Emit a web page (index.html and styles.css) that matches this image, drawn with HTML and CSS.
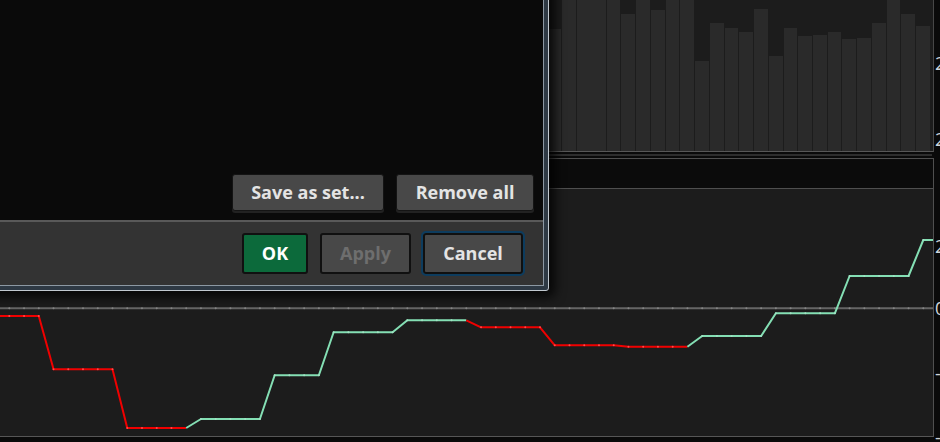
FILE: index.html
```html
<!DOCTYPE html>
<html>
<head>
<meta charset="utf-8">
<title>Chart settings</title>
<link rel="stylesheet" href="styles.css">
</head>
<body>
<div class="app">
  <div class="charts">
    <div class="bars-panel">
      <svg class="bars" width="933" height="151" viewBox="0 0 933 151">
        <g fill="#2a2a2a">
          <rect x="548" y="29" width="13" height="122"/>
          <rect x="562" y="0" width="14" height="151"/>
          <rect x="577" y="0" width="29" height="151"/>
          <rect x="607" y="0" width="13" height="151"/>
          <rect x="621" y="14" width="14" height="137"/>
          <rect x="636" y="0" width="14" height="151"/>
          <rect x="651" y="10" width="14" height="141"/>
          <rect x="666" y="0" width="13" height="151"/>
          <rect x="680" y="0" width="14" height="151"/>
          <rect x="695" y="61" width="14" height="90"/>
          <rect x="710" y="23" width="14" height="128"/>
          <rect x="725" y="28" width="13" height="123"/>
          <rect x="739" y="32" width="14" height="119"/>
          <rect x="754" y="9" width="14" height="142"/>
          <rect x="769" y="56" width="14" height="95"/>
          <rect x="784" y="28" width="13" height="123"/>
          <rect x="798" y="36" width="14" height="115"/>
          <rect x="813" y="35" width="14" height="116"/>
          <rect x="828" y="32" width="13" height="119"/>
          <rect x="842" y="39" width="14" height="112"/>
          <rect x="857" y="38" width="14" height="113"/>
          <rect x="872" y="23" width="14" height="128"/>
          <rect x="887" y="0" width="13" height="151"/>
          <rect x="901" y="14" width="14" height="137"/>
          <rect x="916" y="26" width="14" height="125"/>
        </g>
      </svg>
    </div>
    <div class="strip"></div>
    <div class="info-box"></div>
    <div class="line-panel">
      <svg class="lines" width="933" height="247" viewBox="0 0 933 247">
        <defs>
          <marker id="dot-red" markerUnits="userSpaceOnUse" markerWidth="4" markerHeight="4" refX="2" refY="2">
            <circle cx="2" cy="2" r="1" fill="#ff4a4a"/>
          </marker>
          <marker id="dot-green" markerUnits="userSpaceOnUse" markerWidth="4" markerHeight="4" refX="2" refY="2">
            <circle cx="2" cy="2" r="1" fill="#a3e2c4"/>
          </marker>
        </defs>
        <line x1="0" y1="119.3" x2="933" y2="119.3" stroke="#656565" stroke-width="2"/>
        <path d="M9.3 119.3 H940" stroke="#858585" stroke-width="2" stroke-linecap="round" stroke-dasharray="0 14.742" fill="none"/>
        <polyline class="down" points="-5.4,127 9.3,127 24.04,127 38.78,127 53.53,180.3 68.27,180.3 83.01,180.3 97.75,180.3 112.49,180.3 127.24,239 141.98,239 156.72,239 171.46,239 186.2,239"/>
        <polyline class="up" points="186.2,239 200.95,230 215.69,230 230.43,230 245.17,230 259.91,230 274.66,186.3 289.4,186.3 304.14,186.3 318.88,186.3 333.62,143.3 348.37,143.3 363.11,143.3 377.85,143.3 392.59,143.3 407.33,131.3 422.08,131.3 436.82,131.3 451.56,131.3 466.3,131.3"/>
        <polyline class="down" points="466.3,131.3 481.04,138.3 495.79,138.3 510.53,138.3 525.27,138.3 540.01,138.3 554.75,156.3 569.5,156.3 584.24,156.3 598.98,156.3 613.72,156.3 628.46,157.7 643.21,157.7 657.95,157.7 672.69,157.7 687.43,157.7"/>
        <polyline class="up" points="687.43,157.7 702.17,147 716.92,147 731.66,147 746.4,147 761.14,147 775.88,124.3 790.63,124.3 805.37,124.3 820.11,124.3 834.85,124.3 849.59,87 864.34,87 879.08,87 893.82,87 908.56,87 923.3,51 938.05,51"/>
      </svg>
    </div>
  </div>
  <div class="axis">
    <span class="tick" style="top:54px">2</span>
    <span class="tick" style="top:130px">2</span>
    <span class="tick" style="top:237px">2</span>
    <span class="tick" style="top:299px">0</span>
    <span class="tick" style="top:364px">-1</span>
    <span class="tick" style="top:428px">-2</span>
  </div>
</div>

<div class="dialog">
  <div class="dialog-inner">
    <div class="dialog-body">
      <div class="body-actions">
        <button class="btn btn-wide btn-save">Save as set...</button>
        <button class="btn btn-wide btn-remove">Remove all</button>
      </div>
    </div>
    <div class="dialog-footer">
      <button class="btn btn-foot btn-ok">OK</button>
      <button class="btn btn-foot btn-apply" disabled>Apply</button>
      <button class="btn btn-foot btn-cancel">Cancel</button>
    </div>
  </div>
</div>
</body>
</html>
```
FILE: styles.css
```css
* {
  box-sizing: border-box;
}

html, body {
  margin: 0;
  padding: 0;
}

body {
  width: 940px;
  height: 442px;
  overflow: hidden;
  position: relative;
  background: #0a0a0a;
  font-family: "Open Sans", "Noto Sans", sans-serif;
}

.app {
  display: flex;
  height: 442px;
}

.charts {
  width: 934px;
  display: flex;
  flex-direction: column;
}

.bars-panel {
  height: 152px;
  background: #1c1c1c;
  border-right: 1px solid #474747;
  border-bottom: 1px solid #575757;
}

.bars,
.lines {
  display: block;
}

.strip {
  margin: 2px 2px 2px 0;
  height: 2px;
  background: #2d2d2d;
}

.info-box {
  height: 31px;
  background: #0b0b0b;
  border: 1px solid #4f4f4f;
  border-left: none;
}

.line-panel {
  height: 248px;
  background: #1c1c1c;
  border-right: 1px solid #4f4f4f;
  border-bottom: 1px solid #565656;
}

.lines polyline {
  fill: none;
  stroke-width: 2;
  stroke-linejoin: round;
}

.lines .down {
  stroke: #f00000;
  marker-mid: url(#dot-red);
}

.lines .up {
  stroke: #84dfb4;
  marker-mid: url(#dot-green);
}

.axis {
  flex: 1;
  position: relative;
  overflow: hidden;
}

.tick {
  position: absolute;
  left: 1px;
  font-size: 18px;
  line-height: 18px;
  color: #cfd5db;
  white-space: nowrap;
}

/* Dialog overlay */
.dialog {
  position: absolute;
  left: -100px;
  top: -50px;
  width: 649px;
  height: 341px;
  border: 1px solid #c2c9d0;
  border-radius: 3px;
  padding: 4px;
  background: #2e3944;
  box-shadow: 3px 3px 11px 3px rgba(0, 0, 0, 0.78);
}

.dialog-inner {
  height: 100%;
  border: 1px solid #8c98a3;
  display: flex;
  flex-direction: column;
}

.dialog-body {
  height: 264px;
  background: #0a0a0a;
  display: flex;
  flex-direction: column;
  justify-content: flex-end;
  padding: 0 9px 9px 0;
}

.body-actions {
  display: flex;
  justify-content: flex-end;
  gap: 12px;
}

.btn {
  font-family: "Open Sans", "Noto Sans", sans-serif;
  font-weight: 700;
  font-size: 18px;
  color: #e4e4e4;
  background: #484848;
  border-radius: 3px;
  padding: 0 0 2px;
  margin: 0;
  display: flex;
  align-items: center;
  justify-content: center;
}

.btn-wide {
  height: 37px;
  border: 1px solid #141414;
  box-shadow: 0 2px 0 #222222;
}

.btn-save {
  width: 152px;
}

.btn-remove {
  width: 138px;
}

.dialog-footer {
  height: 65px;
  border-top: 2px solid #595959;
  background: #333333;
  display: flex;
  justify-content: flex-end;
  align-items: center;
  gap: 12px;
  padding-right: 20px;
}

.btn-foot {
  height: 41px;
  border: 2px solid #101010;
}

.btn-ok {
  width: 66px;
  background: #0c6a3b;
  color: #ffffff;
}

.btn-apply {
  width: 91px;
  color: #6e6e6e;
}

.btn-cancel {
  width: 100px;
  outline: 2px solid #0d3c5e;
  outline-offset: 0;
}
```
